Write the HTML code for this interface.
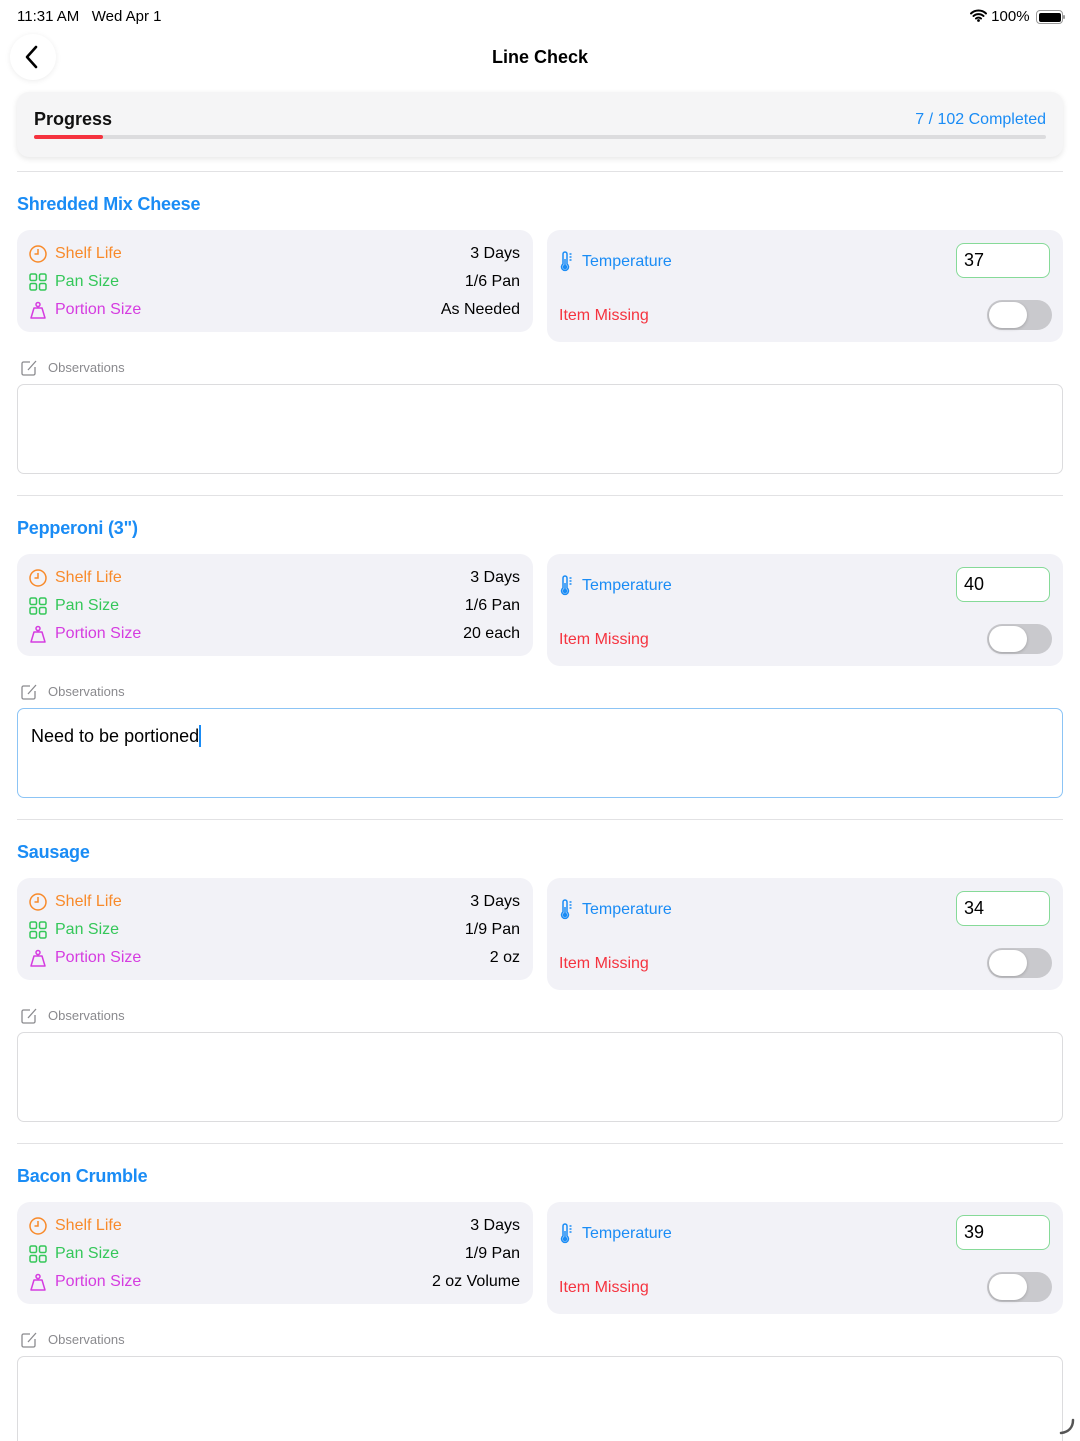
<!DOCTYPE html>
<html><head><meta charset="utf-8">
<style>
*{box-sizing:border-box;margin:0;padding:0}
html{overflow:hidden;height:1441px}
body{width:1080px;height:1441px;overflow:hidden;background:#fff;font-family:"Liberation Sans",sans-serif;position:relative;color:#000}
.a{position:absolute}
.sec{position:absolute;left:0;width:1080px;height:324px}
.div{position:absolute;left:17px;width:1046px;top:0;height:1px;background:#e2e2e4}
.ttl{position:absolute;left:17px;top:22px;font-size:18px;font-weight:bold;color:#1a8cf5;letter-spacing:-0.2px}
.lc{position:absolute;left:17px;top:58px;width:516px;height:102px;background:#f2f2f7;border-radius:13px}
.rc{position:absolute;left:547px;top:58px;width:516px;height:112px;background:#f2f2f7;border-radius:13px}
.row{position:absolute;left:12px;right:13px;height:22px;font-size:16px;line-height:22px}
.row svg{position:absolute;left:0;top:2px}
.row .l{position:absolute;left:26px}
.row .v{position:absolute;right:0}
.inp{position:absolute;left:409px;top:13px;width:94px;height:35px;border:1.5px solid #86da98;border-radius:8px;background:#fff;font-size:18px;line-height:32px;padding-left:7px}
.tog{position:absolute;left:440px;top:70px;width:65px;height:30px;border-radius:15px;background:#c9c9cd}
.tog:after{content:"";position:absolute;left:2px;top:2px;width:38px;height:26px;border-radius:13px;background:#fff;box-shadow:0 1px 3px rgba(0,0,0,.2)}
.obs{position:absolute;left:20px;top:188px;font-size:13px;color:#8a8a8e;line-height:16px}
.obs svg{position:absolute;left:0;top:-1px}
.obs span{position:absolute;left:28px;white-space:nowrap}
.ta{position:absolute;left:17px;top:212px;width:1046px;height:90px;border:1px solid #dcdcde;border-radius:7px;background:#fff}
</style></head><body>

<div class="a" style="left:17px;top:8px;font-size:15px;line-height:18px;">11:31 AM&nbsp;&nbsp;&nbsp;Wed Apr 1</div>
<div class="a" style="left:970px;top:8px;font-size:15px;line-height:18px;">
<svg width="17" height="13" viewBox="0 0 17 13" style="vertical-align:-1px"><path d="M1 4.5a11 11 0 0 1 15 0M3.5 7a7.5 7.5 0 0 1 10 0M6 9.5a4 4 0 0 1 5 0" stroke="#000" stroke-width="2" fill="none" stroke-linecap="round"/><circle cx="8.5" cy="11.5" r="1.4"/></svg> 100%
</div>
<div class="a" style="left:1036px;top:10px;width:27px;height:14px;border:1.5px solid #999;border-radius:4px;padding:1.5px"><div style="width:100%;height:100%;background:#000;border-radius:2px"></div></div>
<div class="a" style="left:1063px;top:15px;width:2px;height:4px;background:#999;border-radius:1px"></div>

<div class="a" style="left:10px;top:34px;width:46px;height:46px;border-radius:50%;background:#fff;box-shadow:0 1px 6px rgba(0,0,0,.08)"></div>
<svg class="a" style="left:24px;top:45px" width="16" height="24" viewBox="0 0 16 24"><path d="M12 2L3 12l9 10" stroke="#000" stroke-width="2.6" fill="none" stroke-linecap="round" stroke-linejoin="round"/></svg>
<div class="a" style="left:0;width:1080px;top:46px;text-align:center;font-size:18px;font-weight:bold;line-height:22px">Line Check</div>

<div class="a" style="left:17px;top:92px;width:1046px;height:65px;background:#f5f5f6;border-radius:12px;box-shadow:0 2px 6px rgba(0,0,0,.1)"></div>
<div class="a" style="left:34px;top:108px;font-size:18px;line-height:22px;font-weight:bold;color:#111">Progress</div>
<div class="a" style="right:34px;top:110px;font-size:16px;line-height:20px;color:#1a8cf5">7 / 102 Completed</div>
<div class="a" style="left:34px;top:135px;width:1012px;height:4px;background:#dcdcde;border-radius:2px"></div>
<div class="a" style="left:34px;top:135px;width:69px;height:4px;background:#f5333f;border-radius:2px"></div>

<div class="sec" style="top:172px">
<div class="div" style="top:-1px"></div>
<div class="ttl">Shredded Mix Cheese</div>
<div class="lc">
 <div class="row" style="top:13px;color:#f88a2a"><svg width="18" height="18" viewBox="0 0 18 18"><circle cx="9" cy="9" r="8" stroke="#f88a2a" stroke-width="1.5" fill="none"/><path d="M9 4v5H5.5" stroke="#f88a2a" stroke-width="1.5" fill="none"/></svg><span class="l">Shelf Life</span><span class="v" style="color:#000">3 Days</span></div>
 <div class="row" style="top:41px;color:#34c759"><svg width="18" height="18" viewBox="0 0 18 18" fill="none" stroke="#34c759" stroke-width="1.5"><rect x="1" y="1" width="6.5" height="6.5" rx="1.5"/><rect x="10.5" y="1" width="6.5" height="6.5" rx="1.5"/><rect x="1" y="10.5" width="6.5" height="6.5" rx="1.5"/><rect x="10.5" y="10.5" width="6.5" height="6.5" rx="1.5"/></svg><span class="l">Pan Size</span><span class="v" style="color:#000">1/6 Pan</span></div>
 <div class="row" style="top:69px;color:#d53ce0"><svg width="18" height="18" viewBox="0 0 18 18" fill="none" stroke="#d53ce0" stroke-width="1.5"><path d="M5 7h8l3 10H2z" stroke-linejoin="round"/><circle cx="9" cy="3.5" r="2"/><path d="M9 5.5V7"/></svg><span class="l">Portion Size</span><span class="v" style="color:#000">As Needed</span></div>
</div>
<div class="rc">
 <svg class="a" style="left:13px;top:21px" width="14" height="22" viewBox="0 0 14 22" fill="none" stroke="#1a8cf5" stroke-width="1.5"><path d="M3 3a2 2 0 0 1 4 0v10a3.5 3.5 0 1 1-4 0z"/><circle cx="5" cy="16" r="1.6" fill="#1a8cf5"/><path d="M5 8v7M9.5 3h2M9.5 6h2M9.5 9h2"/></svg>
 <div class="a" style="left:35px;top:21px;font-size:16px;line-height:22px;color:#1a8cf5">Temperature</div>
 <div class="inp">37</div>
 <div class="a" style="left:12px;top:75px;font-size:16px;line-height:22px;color:#f5333f">Item Missing</div>
 <div class="tog"></div>
</div>
<div class="obs"><svg width="18" height="18" viewBox="0 0 18 18" fill="none" stroke="#8a8a8e" stroke-width="1.3"><path d="M10 3H3.5A1.5 1.5 0 0 0 2 4.5v10A1.5 1.5 0 0 0 3.5 16h10a1.5 1.5 0 0 0 1.5-1.5V8"/><path d="M8 11l8-9"/></svg><span>Observations</span></div>
<div class="ta"></div>
</div>

<div class="sec" style="top:496px">
<div class="div" style="top:-1px"></div>
<div class="ttl">Pepperoni (3")</div>
<div class="lc">
 <div class="row" style="top:13px;color:#f88a2a"><svg width="18" height="18" viewBox="0 0 18 18"><circle cx="9" cy="9" r="8" stroke="#f88a2a" stroke-width="1.5" fill="none"/><path d="M9 4v5H5.5" stroke="#f88a2a" stroke-width="1.5" fill="none"/></svg><span class="l">Shelf Life</span><span class="v" style="color:#000">3 Days</span></div>
 <div class="row" style="top:41px;color:#34c759"><svg width="18" height="18" viewBox="0 0 18 18" fill="none" stroke="#34c759" stroke-width="1.5"><rect x="1" y="1" width="6.5" height="6.5" rx="1.5"/><rect x="10.5" y="1" width="6.5" height="6.5" rx="1.5"/><rect x="1" y="10.5" width="6.5" height="6.5" rx="1.5"/><rect x="10.5" y="10.5" width="6.5" height="6.5" rx="1.5"/></svg><span class="l">Pan Size</span><span class="v" style="color:#000">1/6 Pan</span></div>
 <div class="row" style="top:69px;color:#d53ce0"><svg width="18" height="18" viewBox="0 0 18 18" fill="none" stroke="#d53ce0" stroke-width="1.5"><path d="M5 7h8l3 10H2z" stroke-linejoin="round"/><circle cx="9" cy="3.5" r="2"/><path d="M9 5.5V7"/></svg><span class="l">Portion Size</span><span class="v" style="color:#000">20 each</span></div>
</div>
<div class="rc">
 <svg class="a" style="left:13px;top:21px" width="14" height="22" viewBox="0 0 14 22" fill="none" stroke="#1a8cf5" stroke-width="1.5"><path d="M3 3a2 2 0 0 1 4 0v10a3.5 3.5 0 1 1-4 0z"/><circle cx="5" cy="16" r="1.6" fill="#1a8cf5"/><path d="M5 8v7M9.5 3h2M9.5 6h2M9.5 9h2"/></svg>
 <div class="a" style="left:35px;top:21px;font-size:16px;line-height:22px;color:#1a8cf5">Temperature</div>
 <div class="inp">40</div>
 <div class="a" style="left:12px;top:75px;font-size:16px;line-height:22px;color:#f5333f">Item Missing</div>
 <div class="tog"></div>
</div>
<div class="obs"><svg width="18" height="18" viewBox="0 0 18 18" fill="none" stroke="#8a8a8e" stroke-width="1.3"><path d="M10 3H3.5A1.5 1.5 0 0 0 2 4.5v10A1.5 1.5 0 0 0 3.5 16h10a1.5 1.5 0 0 0 1.5-1.5V8"/><path d="M8 11l8-9"/></svg><span>Observations</span></div>
<div class="ta" style="border-color:#8cc4f5"><div class="a" style="left:13px;top:16px;font-size:18px;line-height:22px">Need to be portioned<span style="display:inline-block;width:2px;height:22px;background:#1a8cf5;vertical-align:-5px"></span></div></div>
</div>

<div class="sec" style="top:820px">
<div class="div" style="top:-1px"></div>
<div class="ttl">Sausage</div>
<div class="lc">
 <div class="row" style="top:13px;color:#f88a2a"><svg width="18" height="18" viewBox="0 0 18 18"><circle cx="9" cy="9" r="8" stroke="#f88a2a" stroke-width="1.5" fill="none"/><path d="M9 4v5H5.5" stroke="#f88a2a" stroke-width="1.5" fill="none"/></svg><span class="l">Shelf Life</span><span class="v" style="color:#000">3 Days</span></div>
 <div class="row" style="top:41px;color:#34c759"><svg width="18" height="18" viewBox="0 0 18 18" fill="none" stroke="#34c759" stroke-width="1.5"><rect x="1" y="1" width="6.5" height="6.5" rx="1.5"/><rect x="10.5" y="1" width="6.5" height="6.5" rx="1.5"/><rect x="1" y="10.5" width="6.5" height="6.5" rx="1.5"/><rect x="10.5" y="10.5" width="6.5" height="6.5" rx="1.5"/></svg><span class="l">Pan Size</span><span class="v" style="color:#000">1/9 Pan</span></div>
 <div class="row" style="top:69px;color:#d53ce0"><svg width="18" height="18" viewBox="0 0 18 18" fill="none" stroke="#d53ce0" stroke-width="1.5"><path d="M5 7h8l3 10H2z" stroke-linejoin="round"/><circle cx="9" cy="3.5" r="2"/><path d="M9 5.5V7"/></svg><span class="l">Portion Size</span><span class="v" style="color:#000">2 oz</span></div>
</div>
<div class="rc">
 <svg class="a" style="left:13px;top:21px" width="14" height="22" viewBox="0 0 14 22" fill="none" stroke="#1a8cf5" stroke-width="1.5"><path d="M3 3a2 2 0 0 1 4 0v10a3.5 3.5 0 1 1-4 0z"/><circle cx="5" cy="16" r="1.6" fill="#1a8cf5"/><path d="M5 8v7M9.5 3h2M9.5 6h2M9.5 9h2"/></svg>
 <div class="a" style="left:35px;top:21px;font-size:16px;line-height:22px;color:#1a8cf5">Temperature</div>
 <div class="inp">34</div>
 <div class="a" style="left:12px;top:75px;font-size:16px;line-height:22px;color:#f5333f">Item Missing</div>
 <div class="tog"></div>
</div>
<div class="obs"><svg width="18" height="18" viewBox="0 0 18 18" fill="none" stroke="#8a8a8e" stroke-width="1.3"><path d="M10 3H3.5A1.5 1.5 0 0 0 2 4.5v10A1.5 1.5 0 0 0 3.5 16h10a1.5 1.5 0 0 0 1.5-1.5V8"/><path d="M8 11l8-9"/></svg><span>Observations</span></div>
<div class="ta"></div>
</div>

<div class="sec" style="top:1144px">
<div class="div" style="top:-1px"></div>
<div class="ttl">Bacon Crumble</div>
<div class="lc">
 <div class="row" style="top:13px;color:#f88a2a"><svg width="18" height="18" viewBox="0 0 18 18"><circle cx="9" cy="9" r="8" stroke="#f88a2a" stroke-width="1.5" fill="none"/><path d="M9 4v5H5.5" stroke="#f88a2a" stroke-width="1.5" fill="none"/></svg><span class="l">Shelf Life</span><span class="v" style="color:#000">3 Days</span></div>
 <div class="row" style="top:41px;color:#34c759"><svg width="18" height="18" viewBox="0 0 18 18" fill="none" stroke="#34c759" stroke-width="1.5"><rect x="1" y="1" width="6.5" height="6.5" rx="1.5"/><rect x="10.5" y="1" width="6.5" height="6.5" rx="1.5"/><rect x="1" y="10.5" width="6.5" height="6.5" rx="1.5"/><rect x="10.5" y="10.5" width="6.5" height="6.5" rx="1.5"/></svg><span class="l">Pan Size</span><span class="v" style="color:#000">1/9 Pan</span></div>
 <div class="row" style="top:69px;color:#d53ce0"><svg width="18" height="18" viewBox="0 0 18 18" fill="none" stroke="#d53ce0" stroke-width="1.5"><path d="M5 7h8l3 10H2z" stroke-linejoin="round"/><circle cx="9" cy="3.5" r="2"/><path d="M9 5.5V7"/></svg><span class="l">Portion Size</span><span class="v" style="color:#000">2 oz Volume</span></div>
</div>
<div class="rc">
 <svg class="a" style="left:13px;top:21px" width="14" height="22" viewBox="0 0 14 22" fill="none" stroke="#1a8cf5" stroke-width="1.5"><path d="M3 3a2 2 0 0 1 4 0v10a3.5 3.5 0 1 1-4 0z"/><circle cx="5" cy="16" r="1.6" fill="#1a8cf5"/><path d="M5 8v7M9.5 3h2M9.5 6h2M9.5 9h2"/></svg>
 <div class="a" style="left:35px;top:21px;font-size:16px;line-height:22px;color:#1a8cf5">Temperature</div>
 <div class="inp">39</div>
 <div class="a" style="left:12px;top:75px;font-size:16px;line-height:22px;color:#f5333f">Item Missing</div>
 <div class="tog"></div>
</div>
<div class="obs"><svg width="18" height="18" viewBox="0 0 18 18" fill="none" stroke="#8a8a8e" stroke-width="1.3"><path d="M10 3H3.5A1.5 1.5 0 0 0 2 4.5v10A1.5 1.5 0 0 0 3.5 16h10a1.5 1.5 0 0 0 1.5-1.5V8"/><path d="M8 11l8-9"/></svg><span>Observations</span></div>
<div class="ta" style="height:100px;border-bottom:none;border-radius:7px 7px 0 0"></div>
</div>

<svg class="a" style="left:1058px;top:1418px" width="18" height="18" viewBox="0 0 18 18"><path d="M15 2c0 7-4 12-12 13" stroke="#555" stroke-width="2.5" fill="none" stroke-linecap="round"/></svg>
</body></html>
